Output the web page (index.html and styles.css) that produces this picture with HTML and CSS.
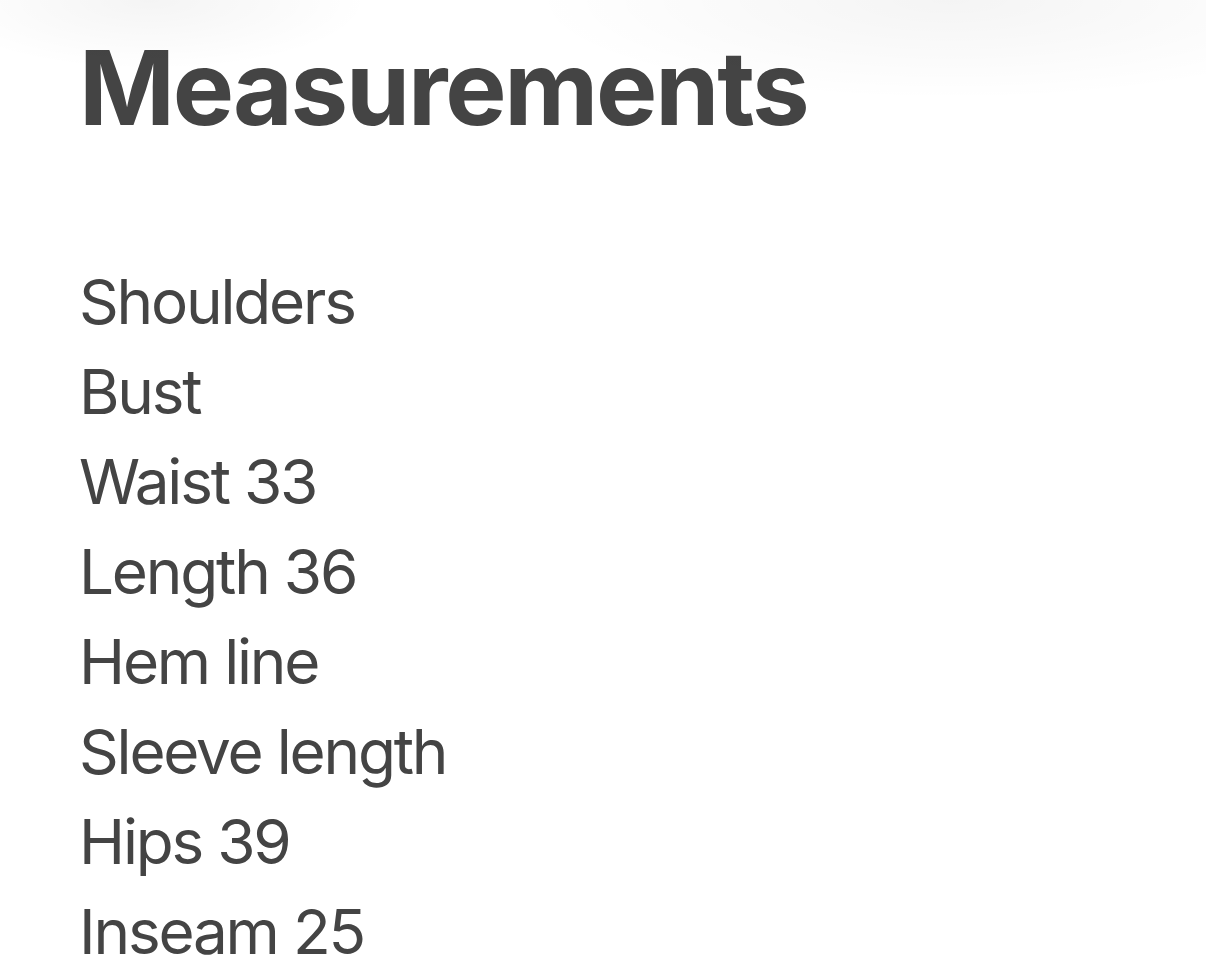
FILE: index.html
```html
<!DOCTYPE html>
<html>
<head>
<meta charset="utf-8">
<link rel="stylesheet" href="styles.css">
</head>
<body>
<div class="fade"></div>
<main class="page">
  <h1 class="title">Measurements</h1>
  <ul class="list">
    <li>Shoulders</li>
    <li>Bust</li>
    <li>Waist 33</li>
    <li>Length 36</li>
    <li>Hem line</li>
    <li>Sleeve length</li>
    <li>Hips 39</li>
    <li>Inseam 25</li>
  </ul>
</main>
</body>
</html>
```
FILE: styles.css
```css
html, body {
  margin: 0;
  padding: 0;
  background: #ffffff;
}
body {
  font-family: Inter, "Liberation Sans", sans-serif;
  color: #444444;
  width: 1206px;
  height: 978px;
  overflow: hidden;
  position: relative;
}
.fade {
  position: absolute;
  left: 0;
  top: 0;
  width: 1206px;
  height: 130px;
  pointer-events: none;
  background:
    radial-gradient(ellipse 220px 70px at 150px 0px, rgba(0,0,0,0.045), rgba(0,0,0,0) 100%),
    radial-gradient(ellipse 420px 100px at 950px 0px, rgba(0,0,0,0.045), rgba(0,0,0,0) 100%);
}
.page {
  padding: 36px 0 0 79px;
}
.title {
  margin: 0;
  font-size: 103px;
  line-height: 103px;
  font-weight: 700;
  letter-spacing: -2.2px;
}
.list {
  list-style: none;
  margin: 118px 0 0 0;
  padding: 0;
}
.list li {
  font-size: 62px;
  line-height: 90px;
  font-weight: 400;
  letter-spacing: -2.2px;
}
```
